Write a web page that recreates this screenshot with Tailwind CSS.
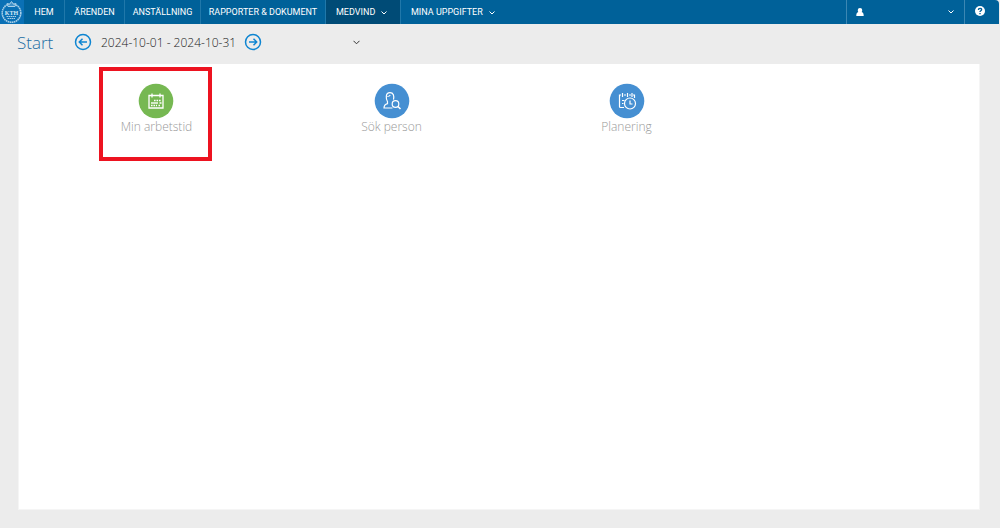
<!DOCTYPE html>
<html lang="sv">
<head>
<meta charset="utf-8">
<meta name="viewport" content="width=device-width, initial-scale=1">
<title>Start</title>
<script src="https://cdn.jsdelivr.net/npm/@tailwindcss/browser@4"></script>
</head>
<body class="flex min-h-screen flex-col bg-[#ececec] font-['Open_Sans',sans-serif]">
<header class="mr-px flex h-6 rounded-tr bg-[#006199] font-[Roboto,sans-serif] text-[9px] text-white">
  <a href="#" aria-label="KTH" class="block h-6 w-6 shrink-0 bg-[#0a70b5]">
    <svg viewBox="0 0 24 24" class="h-6 w-6" fill="none" stroke="#a9cfe8">
      <circle cx="11.5" cy="13" r="9.3" stroke-width="1.6" stroke-dasharray="1.600 .5"/>
      <path d="M8 6.500 7 3.500l2.300 1L11.500 1.500l2.200 3 2.300-1-1 3z" fill="#3f90c8" stroke-width="1"/>
      <path d="M6.500 16.500h10M7.500 18.500h8" stroke-width="1" stroke-dasharray="1.500 .5"/>
      <text x="11.5" y="14.500" text-anchor="middle" font-family="Liberation Serif, serif" font-weight="bold" font-size="6" fill="#d5e8f5" stroke="none">KTH</text>
    </svg>
  </a>
  <nav class="flex *:pt-0.5">
    <a href="#" class="flex w-[41px] items-center justify-center border-r border-[#2078aa]">HEM</a>
    <a href="#" class="flex w-[60px] items-center justify-center border-r border-[#2078aa]">ÄRENDEN</a>
    <a href="#" class="flex w-[76px] items-center justify-center border-r border-[#2078aa]">ANSTÄLLNING</a>
    <a href="#" class="flex w-[125px] items-center justify-center whitespace-nowrap border-r border-[#2078aa]">RAPPORTER &amp; DOKUMENT</a>
    <button class="flex w-[75px] items-center gap-1.5 border-r border-[#2078aa] bg-[#004b76] pl-[10px]">MEDVIND
      <svg viewBox="0 0 6 4" class="h-1 w-1.5" fill="none" stroke="currentColor"><path d="M.5.5 3 3 5.5.5"/></svg>
    </button>
    <button class="flex items-center gap-1.5 whitespace-nowrap pl-[10px]">MINA UPPGIFTER
      <svg viewBox="0 0 6 4" class="h-1 w-1.5" fill="none" stroke="currentColor"><path d="M.5.5 3 3 5.5.5"/></svg>
    </button>
  </nav>
  <button aria-label="Användare" class="ml-auto flex w-[118px] items-center justify-between border-l border-[#3c87b3] pl-[9px] pr-[10px]">
    <svg viewBox="0 0 8 8" class="h-2 w-2" fill="currentColor"><path d="M4 0a2.200 2.200 0 0 1 2.200 2.400c0 .8-.3 1.300-.6 1.600C7.200 4.400 7.700 5.500 7.700 8H.3C.3 5.500.8 4.400 2.400 4c-.3-.3-.6-.8-.6-1.600A2.200 2.200 0 0 1 4 0z"/></svg>
    <svg viewBox="0 0 6 4" class="h-1 w-1.5" fill="none" stroke="currentColor"><path d="M.5.5 3 3 5.5.5"/></svg>
  </button>
  <button aria-label="Hjälp" class="flex w-[35px] items-center border-l border-[#3c87b3] pb-[3px] pl-[10px]">
    <svg viewBox="0 0 10 10" class="h-[10px] w-[10px]"><circle cx="5" cy="5" r="5" fill="#fff"/><path d="M3.400 3.900C3.400 1.800 6.700 1.900 6.600 3.700 6.600 4.800 5 4.700 5 6" fill="none" stroke="#006199" stroke-width="1.400"/><path d="M4.300 6.900h1.400v1.300H4.300z" fill="#006199"/></svg>
  </button>
</header>
<div class="flex h-10 items-center pb-1 pl-[17px]">
  <h1 class="w-[57px] pt-0.5 text-[17px] font-light text-[#1c6ea4]">Start</h1>
  <button aria-label="Föregående period">
    <svg viewBox="0 0 18 18" class="h-[18px] w-[18px]" fill="none" stroke="#0e85d1" stroke-width="1.500"><circle cx="9" cy="9" r="7.500"/><path d="M13 9H5.500M8.500 5.800 5.300 9l3.200 3.200"/></svg>
  </button>
  <span class="w-[143px] whitespace-nowrap pl-[9px] pt-px text-[12px] font-light text-[#222]">2024-10-01 - 2024-10-31</span>
  <button aria-label="Nästa period" class="ml-[9px]">
    <svg viewBox="0 0 18 18" class="h-[18px] w-[18px]" fill="none" stroke="#0e85d1" stroke-width="1.500"><circle cx="9" cy="9" r="7.500"/><path d="M5 9h7.500M9.500 5.800 12.700 9l-3.200 3.200"/></svg>
  </button>
  <button aria-label="Välj" class="flex w-[98px] justify-end">
    <svg viewBox="0 0 7 5" class="h-[5px] w-[7px]" fill="none" stroke="#333"><path d="M.5.800 3.500 3.800 6.500.800"/></svg>
  </button>
</div>
<main class="mb-[18px] ml-[18px] mr-5 grid flex-1 grid-cols-4 items-start border-x border-b border-[#f5f5f5] bg-white pl-5 pt-[19px] text-[12px] font-light text-[#999]">
  <div class="relative flex justify-center">
    <a href="#" class="flex flex-col items-center">
      <svg viewBox="0 0 36 36" class="h-9 w-9" fill="none" stroke="#fff"><circle cx="18" cy="18" r="17.300" fill="#76b852" stroke="none"/><path d="M11 12.500h14v12.500H11z" stroke-width="1.300"/><path d="M14 10.500v4M22 10.500v4" stroke-width="1.300"/><path d="M16 17.500h7.500M13 22.500h6" stroke-dasharray="1.600 .9" stroke-width="1.300"/><path d="M13 20h7" stroke-width="1.400"/><path d="M21.500 20h2M20.500 22.500h1.500" stroke-width="1.300"/></svg>
      <span class="leading-4">Min arbetstid</span>
    </a>
    <div class="absolute -top-4 left-[60px] h-[94px] w-[113px] border-4 border-[#ed1320]"></div>
  </div>
  <a href="#" class="flex flex-col items-center">
    <svg viewBox="0 0 36 36" class="h-9 w-9" fill="none" stroke="#fff" stroke-width="1.200"><circle cx="18" cy="18" r="17.300" fill="#458fd2" stroke="none"/><path d="M18.500 25H10c0-2.800.8-3.600 3.500-4.300v-2c-1.500-2.500-2.500-9 2.500-9 3.500 0 4.300 3 3.500 7"/><path d="M13.300 13.500c1.700 0 2.500-.7 3-1.500"/><circle cx="21.500" cy="21" r="3.300"/><path d="m24 23.500 2.500 2.500" stroke-width="1.600"/></svg>
    <span class="leading-4">Sök person</span>
  </a>
  <a href="#" class="flex flex-col items-center">
    <svg viewBox="0 0 36 36" class="h-9 w-9" fill="none" stroke="#fff" stroke-width="1.200"><circle cx="18" cy="18" r="17.300" fill="#458fd2" stroke="none"/><path d="M15 24.500h-3.500a1 1 0 0 1-1-1V12H12M15 12h2M20 12h2M24 12h1.500v3"/><path d="M13.500 10v4M18.500 10v4M23 10v4M13 17.500h2.500M13 20.500h1.500"/><circle cx="21" cy="20.500" r="5.500"/><path d="M21 17.500v3.500h2.500"/></svg>
    <span class="leading-4">Planering</span>
  </a>
</main>
</body>
</html>
